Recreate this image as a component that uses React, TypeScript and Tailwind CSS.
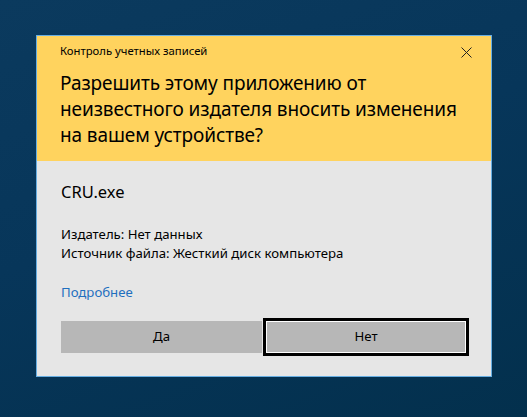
import React from "react";

export default function App() {
  const font = { fontFamily: '"Noto Sans", "Open Sans", sans-serif' };
  return (
    <div
      className="w-[527px] h-[417px] overflow-hidden bg-[linear-gradient(160deg,#0b3a5e_0%,#07365a_45%,#03304d_100%)] pt-[35px] pl-[36px]"
      style={font}
    >
      <div className="w-[456px] h-[342px] border border-[#67aee2] flex flex-col text-black">
        <div className="h-[125px] bg-[#ffd35e] pl-[23px] pr-[19px] pt-[7px] flex flex-col">
          <div className="flex items-start justify-between">
            <div className="text-[11.3px] leading-[16px] whitespace-nowrap">Контроль учетных записей</div>
            <svg width="11" height="11" viewBox="0 0 11 11" className="mt-[4px]">
              <path d="M0.5 0.5 L10.5 10.5 M10.5 0.5 L0.5 10.5" stroke="#222" strokeWidth="1" fill="none" />
            </svg>
          </div>
          <div className="mt-[11px] text-[19px] leading-[26px] whitespace-nowrap tracking-[-0.1px]">
            Разрешить этому приложению от
            <br />
            неизвестного издателя вносить изменения
            <br />
            на вашем устройстве?
          </div>
        </div>
        <div className="flex-1 bg-[#e6e6e6] pl-[24px] pr-[21px] pt-[19px] flex flex-col">
          <div className="text-[16.5px] leading-[24px]">CRU.exe</div>
          <div className="mt-[21px] text-[13.2px] leading-[19px] whitespace-nowrap">
            <div>Издатель: Нет данных</div>
            <div>Источник файла: Жесткий диск компьютера</div>
          </div>
          <div className="mt-[20px] text-[13.2px] leading-[19px] text-[#1f6fbf]">Подробнее</div>
          <div className="mt-[16px] flex items-center gap-[1px]">
            <div className="w-[201px] h-[32px] bg-[#b7b7b7] flex items-center justify-center text-[13.2px]">
              Да
            </div>
            <div className="w-[206px] h-[38px] border-[3px] border-black">
              <div className="w-full h-full border border-white bg-[#b7b7b7] flex items-center justify-center text-[13.2px]">
                Нет
              </div>
            </div>
          </div>
        </div>
      </div>
    </div>
  );
}
